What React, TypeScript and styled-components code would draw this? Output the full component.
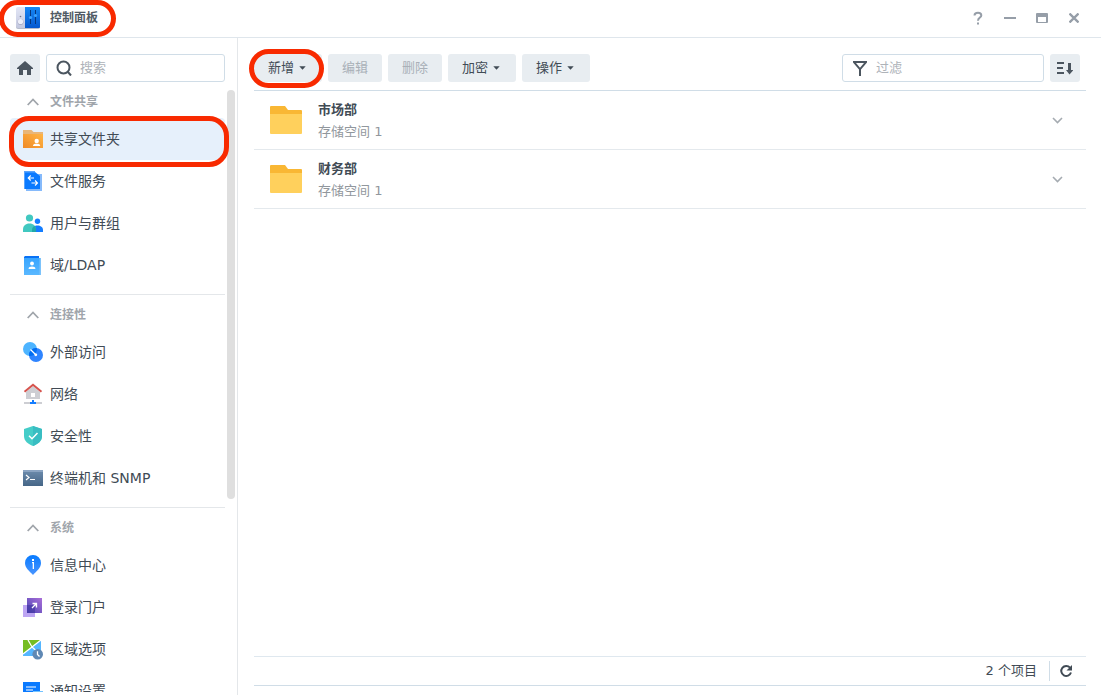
import React from "react";
import styled, { createGlobalStyle, css } from "styled-components";

const GlobalStyle = createGlobalStyle`
  *, *::before, *::after { box-sizing: border-box; }
  body {
    margin: 0;
    background: #fff;
    color: #414b55;
    font-family: "DejaVu Sans", "Noto Sans CJK SC", sans-serif;
    font-size: 13px;
    line-height: 20px;
  }
  button, input { font: inherit; color: inherit; }
  svg { display: block; flex: none; }
  ul { list-style: none; margin: 0; padding: 0; }
`;

const Window = styled.div`
  display: flex;
  flex-direction: column;
  height: 100vh;
  min-height: 400px;
  overflow: hidden;
`;

const TitleBar = styled.header`
  display: flex;
  align-items: center;
  justify-content: space-between;
  height: 38px;
  flex: none;
  padding: 0 11px 1px 16px;
  border-bottom: 1px solid #dfe6ec;
`;

const Brand = styled.div`
  position: relative;
  display: flex;
  align-items: center;
  gap: 10px;
`;

const Title = styled.h1`
  margin: 0;
  font-size: 12px;
  line-height: 20px;
  font-weight: 700;
  color: #505a64;
`;

const WindowControls = styled.div`
  display: flex;
`;

const WindowButton = styled.button`
  display: grid;
  place-items: center;
  width: 32px;
  height: 32px;
  padding: 0;
  border: 0;
  background: none;
  color: #969ea8;
`;

const Body = styled.div`
  display: flex;
  flex: 1;
  min-height: 0;
`;

const Sidebar = styled.aside`
  display: flex;
  flex-direction: column;
  flex: none;
  width: 238px;
  padding: 16px 0 3px;
  border-right: 1px solid #e4e7ea;
`;

const SearchRow = styled.div`
  display: flex;
  gap: 6px;
  flex: none;
  padding: 0 12px 0 10px;
`;

const IconButton = styled.button`
  display: grid;
  place-items: center;
  flex: none;
  width: 30px;
  height: 28px;
  padding: 0;
  border: 0;
  border-radius: 3px;
  background: #e8edf1;
  color: #4b555f;
`;

const Field = styled.label<{ $width?: number }>`
  display: flex;
  align-items: center;
  gap: 8px;
  height: 28px;
  padding: 0 9px;
  border: 1px solid #d0dde7;
  border-radius: 3px;
  background: #fff;
  color: #4b555f;
  ${(p) => (p.$width ? css`width: ${p.$width}px;` : css`flex: 1; min-width: 0;`)}

  input {
    flex: 1;
    min-width: 0;
    padding: 0;
    border: 0;
    outline: 0;
    background: none;
    line-height: 20px;
  }
  input::placeholder { color: #aeb3b9; opacity: 1; }
`;

const NavArea = styled.div`
  display: flex;
  gap: 2px;
  flex: 1;
  min-height: 0;
  padding: 0 2px 0 10px;
  overflow: hidden;
`;

const Nav = styled.nav`
  flex: 1;
  min-width: 0;
`;

const ScrollTrack = styled.div`
  flex: none;
  width: 8px;
  padding-top: 8px;
`;

const ScrollThumb = styled.div`
  height: 68%;
  border-radius: 4px;
  background: #dfdfdf;
`;

const Group = styled.section`
  & + & {
    margin-top: 8px;
    border-top: 1px solid #e4e7ea;
  }
`;

const GroupHeader = styled.button`
  display: flex;
  align-items: center;
  gap: 11px;
  width: 100%;
  height: 36px;
  padding: 4px 0 0 17px;
  border: 0;
  background: none;
  font-size: 12px;
  font-weight: 700;
  color: #a0a5ab;
`;

const NavLink = styled.a<{ $active?: boolean }>`
  position: relative;
  display: flex;
  align-items: center;
  gap: 5px;
  height: 42px;
  padding-left: 11px;
  border-radius: 4px;
  background: ${(p) => (p.$active ? "#e6f0fb" : "transparent")};
  color: #414b55;
  font-size: 14px;
  text-decoration: none;
  white-space: nowrap;
`;

const Main = styled.main`
  display: flex;
  flex-direction: column;
  flex: 1;
  min-width: 0;
  padding: 16px 15px 9px 16px;
`;

const Toolbar = styled.div`
  display: flex;
  align-items: center;
  justify-content: space-between;
  padding: 0 6px 8px 0;
  border-bottom: 1px solid #d0dde7;
`;

const ToolGroup = styled.div`
  display: flex;
  gap: 6px;
`;

const ToolButton = styled.button`
  position: relative;
  display: flex;
  align-items: center;
  gap: 5px;
  height: 28px;
  padding: 0 14px;
  border: 0;
  border-radius: 3px;
  background: #e8edf1;
  white-space: nowrap;

  &[aria-haspopup] { padding-right: 16px; }
  &:disabled { color: #a9b0b8; }
`;

const FolderList = styled.ul`
  flex: 1;
  min-height: 0;
`;

const FolderRow = styled.li`
  display: flex;
  align-items: center;
  gap: 16px;
  height: 59px;
  padding: 0 20px 0 16px;
  border-bottom: 1px solid #e4e9ed;
`;

const FolderText = styled.div`
  flex: 1;
  min-width: 0;
  padding-top: 2px;
`;

const FolderName = styled.div`
  line-height: 22px;
  font-weight: 700;
`;

const FolderVolume = styled.div`
  line-height: 22px;
  color: #91979d;
`;

const ExpandButton = styled.button`
  display: grid;
  place-items: center;
  width: 17px;
  height: 20px;
  padding: 0;
  border: 0;
  background: none;
  color: #a5abb1;
`;

const Footer = styled.footer`
  display: flex;
  align-items: center;
  justify-content: flex-end;
  height: 30px;
  flex: none;
  border-top: 1px solid #dfe8ef;
  border-bottom: 1px solid #d0dde7;
`;

const ItemCount = styled.span`
  padding-right: 12px;
  border-right: 1px solid #d0dde7;
`;

const RefreshButton = styled.button`
  display: grid;
  place-items: center;
  width: 36px;
  height: 28px;
  padding: 0 4px 0 0;
  border: 0;
  background: none;
`;

const Highlight = styled.span<{ $inset: string }>`
  position: absolute;
  inset: ${(p) => p.$inset};
  z-index: 1;
  border: 5px solid #f82a00;
  border-radius: 20px;
  pointer-events: none;
`;

const AppLogo = () => (
  <svg width="24" height="24" viewBox="0 0 24 24" aria-hidden="true">
    <defs>
      <linearGradient id="logoBlue" x1="0" y1="0" x2="0" y2="1">
        <stop offset="0" stopColor="#1687f5" />
        <stop offset="1" stopColor="#0558cf" />
      </linearGradient>
      <linearGradient id="logoGrey" x1="0" y1="0" x2="0" y2="1">
        <stop offset="0" stopColor="#e3e6f5" />
        <stop offset="1" stopColor="#c3c8df" />
      </linearGradient>
    </defs>
    <rect y="3" width="24" height="20" rx="2" fill="#b7bccb" />
    <path d="M2 1h7v21H2a2 2 0 0 1-2-2V3a2 2 0 0 1 2-2z" fill="url(#logoGrey)" />
    <path d="M9 1h14a1 1 0 0 1 1 1v19a1 1 0 0 1-1 1H9z" fill="url(#logoBlue)" />
    <circle cx="4.5" cy="10.5" r=".8" fill="#73788c" />
    <circle cx="4.5" cy="16" r="3" fill="#a9aec6" />
    <circle cx="4.5" cy="15.5" r="2.6" fill="#eef0fa" />
    <path d="M14.5 4v14M19.5 4v14" stroke="#06377f" strokeWidth="1" />
    <circle cx="14.5" cy="11.5" r="1.6" fill="#3ba4ff" />
    <circle cx="19.5" cy="9.5" r="1.6" fill="#3ba4ff" />
  </svg>
);

const HomeIcon = () => (
  <svg width="16" height="16" viewBox="0 0 16 16" aria-hidden="true">
    <path d="M8 1 0 8v1h2v6h4v-5h4v5h4V9h2V8z" fill="currentColor" />
  </svg>
);

const SearchIcon = () => (
  <svg width="16" height="16" viewBox="0 0 16 16" fill="none" stroke="currentColor" strokeWidth="2" aria-hidden="true">
    <circle cx="7.5" cy="7.5" r="6" />
    <path d="m11.500 11.500 3.500 4" />
  </svg>
);

const FilterIcon = () => (
  <svg width="16" height="16" viewBox="0 0 16 16" aria-hidden="true">
    <path d="M1 1h14v1.500L9 9.500V16H7V9.500L1 2.500zm3 2 4 4.700L12 3z" fill="currentColor" fillRule="evenodd" />
  </svg>
);

const SortIcon = () => (
  <svg width="16" height="14" viewBox="0 0 16 14" aria-hidden="true">
    <path d="M0 2h7M0 7h6M0 12h7" stroke="currentColor" strokeWidth="2" />
    <path d="M11 2h3v7h2.500L12.500 13.500 9 9h2z" fill="currentColor" />
  </svg>
);

const Caret = () => (
  <svg width="7" height="4" viewBox="0 0 7 4" aria-hidden="true">
    <path d="M.3.3h6.400L3.500 3.800z" fill="currentColor" />
  </svg>
);

const ChevronUp = () => (
  <svg width="12" height="8" viewBox="0 0 12 8" fill="none" stroke="currentColor" strokeWidth="1.800" aria-hidden="true">
    <path d="M.7 7 6 1.500 11.300 7" />
  </svg>
);

const ChevronDown = () => (
  <svg width="11" height="8" viewBox="0 0 11 8" fill="none" stroke="currentColor" strokeWidth="1.600" aria-hidden="true">
    <path d="M1 2 5.500 6.500 10 2" />
  </svg>
);

const RefreshIcon = () => (
  <svg width="14" height="14" viewBox="0 0 14 14" fill="none" aria-hidden="true">
    <path d="M11 3.600A5 5 0 1 0 12 8.500" stroke="currentColor" strokeWidth="2" />
    <path d="M13 1v5.500H7.500z" fill="currentColor" />
  </svg>
);

const HelpIcon = () => (
  <svg width="12" height="14" viewBox="0 0 12 14" fill="none" stroke="currentColor" strokeWidth="2" aria-hidden="true">
    <path d="M2.500 4.500C2.500 2.500 4 1.800 6 1.800S9.300 2.800 9.300 4.500C9.300 6.600 6 6.600 6 9.700M6 11.500v2" />
  </svg>
);

const MinimizeIcon = () => (
  <svg width="12" height="12" viewBox="0 0 12 12" aria-hidden="true">
    <rect y="5" width="12" height="2" fill="currentColor" />
  </svg>
);

const MaximizeIcon = () => (
  <svg width="12" height="10" viewBox="0 0 12 10" aria-hidden="true">
    <path d="M1 0h10a1 1 0 0 1 1 1v8a1 1 0 0 1-1 1H1a1 1 0 0 1-1-1V1a1 1 0 0 1 1-1zm1 4v5h8V4z" fill="currentColor" fillRule="evenodd" />
  </svg>
);

const CloseIcon = () => (
  <svg width="10" height="10" viewBox="0 0 10 10" stroke="currentColor" strokeWidth="2.300" aria-hidden="true">
    <path d="m.5.5 9 9M9.500.5l-9 9" />
  </svg>
);

const FolderIcon = () => (
  <svg width="32" height="28" viewBox="0 0 32 28" aria-hidden="true">
    <path d="M1 0h14l3 4h13a1 1 0 0 1 1 1v8H0V1a1 1 0 0 1 1-1z" fill="#f9b734" />
    <path d="M0 8h32v19a1 1 0 0 1-1 1H1a1 1 0 0 1-1-1z" fill="#ffd05c" />
  </svg>
);

const navIcons: Record<string, React.ReactNode> = {
  share: (
    <>
      <defs>
        <linearGradient id="shareFill" x1="0" y1="1" x2="1" y2="0">
          <stop offset="0" stopColor="#f08a26" />
          <stop offset="1" stopColor="#ffb546" />
        </linearGradient>
      </defs>
      <path d="M2 3h8.500l2 2H22v8H2z" fill="#e9b678" />
      <path d="M2 7h20v14H2z" fill="url(#shareFill)" />
      <circle cx="15.700" cy="14" r="2.200" fill="#fff" />
      <path d="M12 19c0-1.600 1-2.200 3.600-2.200s3.600.6 3.600 2.200z" fill="#fff" />
    </>
  ),
  service: (
    <>
      <path d="M5 5h16v17H5z" fill="#86bafb" />
      <path d="M3 3h11l5 4v13H3z" fill="#0a7aff" />
      <path d="M3 2h11v1.500H4V20H3z" fill="#5aa3fb" />
      <path d="M13 9H7.500M9.700 6.500 7.200 9l2.500 2.500M10.500 14h6M14 11.500l2.500 2.500-2.500 2.500" fill="none" stroke="#fff" strokeWidth="1.100" />
    </>
  ),
  users: (
    <>
      <circle cx="8.500" cy="7" r="3.600" fill="#41c8c0" />
      <circle cx="16.500" cy="10.300" r="2.700" fill="#147dff" />
      <path d="M11 21v-2c0-3 2.500-4.500 5.500-4.500S22 16 22 19v2z" fill="#147dff" />
      <path d="M2 21v-2.500C2 15 4.500 12.500 8.500 12.500S15 15 15 18.500V21z" fill="#41c8c0" />
      <path d="M11 21v-2c0-2 1-3.200 2.600-3.900.9.900 1.400 2.100 1.400 3.400V21z" fill="#22a8a8" />
    </>
  ),
  domain: (
    <>
      <defs>
        <linearGradient id="domainFill" x1="0" y1="0" x2="0" y2="1">
          <stop offset="0" stopColor="#38a5ff" />
          <stop offset="1" stopColor="#5ab8ff" />
        </linearGradient>
      </defs>
      <path d="M4 3h14v4H3V4z" fill="#0a72f5" />
      <path d="M16 5h4v17h-4z" fill="#7cc3fb" />
      <path d="M3 5h15.500v17H3z" fill="url(#domainFill)" />
      <circle cx="11" cy="10.500" r="1.900" fill="#fff" />
      <path d="M7.600 16c0-2 1.200-2.600 3.400-2.600s3.400.6 3.400 2.600z" fill="#fff" />
    </>
  ),
  access: (
    <>
      <circle cx="9" cy="9" r="7" fill="#4db4ff" />
      <circle cx="15" cy="15" r="7" fill="#2e84ff" />
      <path d="M8.070 15.940A7 7 0 0 1 15.940 8.070 7 7 0 0 1 8.070 15.940z" fill="#006df2" />
      <path d="m9.500 9.500 5 5" stroke="#fff" strokeWidth="1.300" />
      <circle cx="14.800" cy="14.800" r="1.400" fill="#fff" />
    </>
  ),
  network: (
    <>
      <path d="M12 4 5 10v7h14v-7z" fill="#cdced3" />
      <path d="M10 11h4v4h-4z" fill="#fff" />
      <path d="m3.500 9.800 8.500-7 8.500 7" fill="none" stroke="#d6534d" strokeWidth="2" />
      <path d="M3 20h18v2H3z" fill="#cdced3" />
      <path d="M9 20h2v-2h2v2h2v2H9z" fill="#147dff" />
    </>
  ),
  security: (
    <>
      <path d="m12 2 9 3v7c0 5-4 8-9 10-5-2-9-5-9-10V5z" fill="#45cdc8" />
      <path d="m12 2 9 3v7c0 5-4 8-9 10z" fill="#39bdc2" />
      <path d="m8 11.800 3 3 5.500-5.800" fill="none" stroke="#fff" strokeWidth="1.500" />
    </>
  ),
  terminal: (
    <>
      <defs>
        <linearGradient id="terminalFill" x1="0" y1="0" x2="0" y2="1">
          <stop offset="0" stopColor="#6d8cad" />
          <stop offset="1" stopColor="#466687" />
        </linearGradient>
      </defs>
      <rect x="2" y="4" width="20" height="16" fill="url(#terminalFill)" />
      <path d="M2 4h20v2H2z" fill="#8ba4c2" />
      <path d="m5 9 3 2.500L5 14M9 13.500h5" fill="none" stroke="#fff" strokeWidth="1.200" />
    </>
  ),
  info: (
    <>
      <defs>
        <linearGradient id="infoFill" x1="0" y1="0" x2="0" y2="1">
          <stop offset="0" stopColor="#087bff" />
          <stop offset="1" stopColor="#4a95ff" />
        </linearGradient>
      </defs>
      <path d="M12 2a8 8 0 0 1 8 8c0 5-4.500 8-8 12-3.500-4-8-7-8-12a8 8 0 0 1 8-8z" fill="url(#infoFill)" />
      <path d="M11 6h2v2h-2zM11 9h2v7h-1.300v-5.700H11z" fill="#fff" />
    </>
  ),
  portal: (
    <>
      <defs>
        <linearGradient id="portalFill" x1="0" y1="1" x2="1" y2="0">
          <stop offset="0" stopColor="#4b44b4" />
          <stop offset="1" stopColor="#aa6fd8" />
        </linearGradient>
      </defs>
      <rect x="2" y="10" width="12" height="12" fill="#bda5f3" />
      <rect x="6" y="3" width="15" height="15" fill="url(#portalFill)" />
      <path d="M6 10h8v8H6z" fill="#4035a0" opacity=".6" />
      <path d="m11 13 4.500-4.500M11.500 8.500h4v4" fill="none" stroke="#fff" strokeWidth="1.300" />
    </>
  ),
  region: (
    <>
      <path d="M2 3h18v16H2z" fill="#55b6ff" />
      <path d="M2 3h18L2 17z" fill="#76bd22" />
      <path d="M2 17 20 3M7 3l4 7M11 10l9 8" fill="none" stroke="#fff" strokeWidth="1.300" />
      <circle cx="16.700" cy="17.300" r="5.300" fill="#5f88b4" />
      <path d="M16.500 14.300v3.200l2 2" fill="none" stroke="#fff" strokeWidth="1.300" />
    </>
  ),
  notify: (
    <>
      <path d="M2 3h17v15H2z" fill="#0a7aff" />
      <path d="M5 8h10M5 11h7" stroke="#fff" strokeWidth="1.200" />
      <path d="M12 12h10v8H12z" fill="#72c3ff" />
    </>
  ),
};

interface NavEntry {
  icon: string;
  label: string;
  active?: boolean;
}

const groups: { title: string; items: NavEntry[] }[] = [
  {
    title: "文件共享",
    items: [
      { icon: "share", label: "共享文件夹", active: true },
      { icon: "service", label: "文件服务" },
      { icon: "users", label: "用户与群组" },
      { icon: "domain", label: "域/LDAP" },
    ],
  },
  {
    title: "连接性",
    items: [
      { icon: "access", label: "外部访问" },
      { icon: "network", label: "网络" },
      { icon: "security", label: "安全性" },
      { icon: "terminal", label: "终端机和 SNMP" },
    ],
  },
  {
    title: "系统",
    items: [
      { icon: "info", label: "信息中心" },
      { icon: "portal", label: "登录门户" },
      { icon: "region", label: "区域选项" },
      { icon: "notify", label: "通知设置" },
    ],
  },
];

const folders = [
  { name: "市场部", volume: "存储空间 1" },
  { name: "财务部", volume: "存储空间 1" },
];

export default function App() {
  return (
    <>
      <GlobalStyle />
      <Window>
        <TitleBar>
          <Brand>
            <AppLogo />
            <Title>控制面板</Title>
            <Highlight $inset="-6px -18px -7px -17px" />
          </Brand>
          <WindowControls>
            <WindowButton aria-label="帮助"><HelpIcon /></WindowButton>
            <WindowButton aria-label="最小化"><MinimizeIcon /></WindowButton>
            <WindowButton aria-label="最大化"><MaximizeIcon /></WindowButton>
            <WindowButton aria-label="关闭"><CloseIcon /></WindowButton>
          </WindowControls>
        </TitleBar>
        <Body>
          <Sidebar>
            <SearchRow>
              <IconButton aria-label="主页"><HomeIcon /></IconButton>
              <Field>
                <SearchIcon />
                <input type="text" placeholder="搜索" aria-label="搜索" />
              </Field>
            </SearchRow>
            <NavArea>
              <Nav>
                {groups.map((group) => (
                  <Group key={group.title}>
                    <GroupHeader aria-expanded="true">
                      <ChevronUp />
                      {group.title}
                    </GroupHeader>
                    <ul>
                      {group.items.map((item) => (
                        <li key={item.label}>
                          <NavLink href="#" $active={item.active} aria-current={item.active ? "page" : undefined}>
                            <svg width="24" height="24" viewBox="0 0 24 24" aria-hidden="true">
                              {navIcons[item.icon]}
                            </svg>
                            {item.label}
                            {item.active && <Highlight $inset="-2px -4px -7px -1px" />}
                          </NavLink>
                        </li>
                      ))}
                    </ul>
                  </Group>
                ))}
              </Nav>
              <ScrollTrack>
                <ScrollThumb />
              </ScrollTrack>
            </NavArea>
          </Sidebar>
          <Main>
            <Toolbar>
              <ToolGroup>
                <ToolButton aria-haspopup="menu">
                  新增<Caret />
                  <Highlight $inset="-5px -2px -6px -5px" />
                </ToolButton>
                <ToolButton disabled>编辑</ToolButton>
                <ToolButton disabled>删除</ToolButton>
                <ToolButton aria-haspopup="menu">加密<Caret /></ToolButton>
                <ToolButton aria-haspopup="menu">操作<Caret /></ToolButton>
              </ToolGroup>
              <ToolGroup>
                <Field $width={202}>
                  <FilterIcon />
                  <input type="text" placeholder="过滤" aria-label="过滤" />
                </Field>
                <IconButton aria-label="排序"><SortIcon /></IconButton>
              </ToolGroup>
            </Toolbar>
            <FolderList>
              {folders.map((folder) => (
                <FolderRow key={folder.name}>
                  <FolderIcon />
                  <FolderText>
                    <FolderName>{folder.name}</FolderName>
                    <FolderVolume>{folder.volume}</FolderVolume>
                  </FolderText>
                  <ExpandButton aria-label={`展开 ${folder.name}`}><ChevronDown /></ExpandButton>
                </FolderRow>
              ))}
            </FolderList>
            <Footer>
              <ItemCount>2 个项目</ItemCount>
              <RefreshButton aria-label="刷新"><RefreshIcon /></RefreshButton>
            </Footer>
          </Main>
        </Body>
      </Window>
    </>
  );
}
